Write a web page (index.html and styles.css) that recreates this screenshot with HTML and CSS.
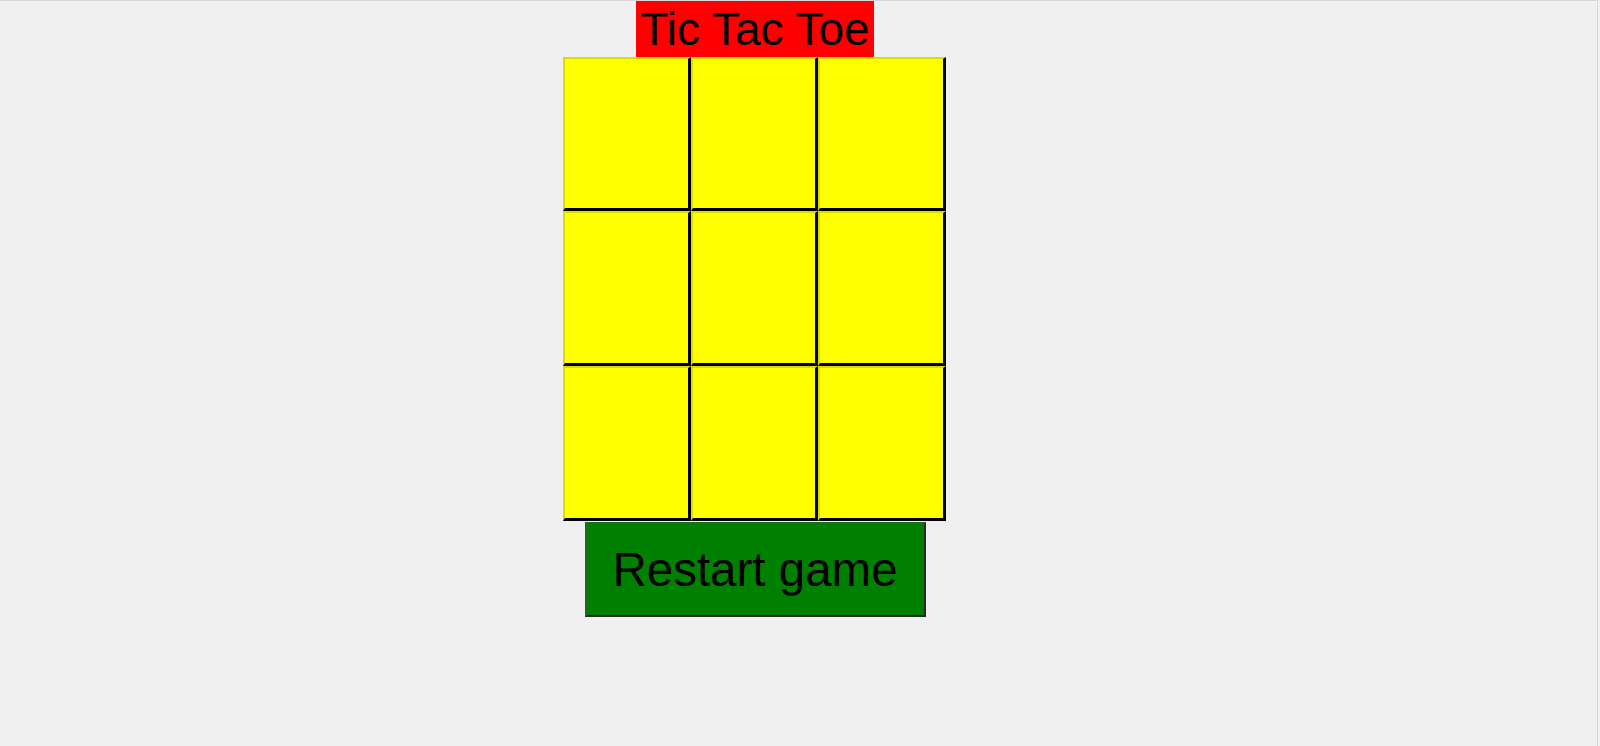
FILE: index.html
```html
<!DOCTYPE html>
<html>
<head>
<meta charset="utf-8">
<title>Tic Tac Toe</title>
<link rel="stylesheet" href="styles.css">
</head>
<body>
<div class="frame">
  <div class="game">
    <h1 class="title">Tic Tac Toe</h1>
    <div class="board">
      <button class="cell"></button>
      <button class="cell"></button>
      <button class="cell"></button>
      <button class="cell"></button>
      <button class="cell"></button>
      <button class="cell"></button>
      <button class="cell"></button>
      <button class="cell"></button>
      <button class="cell"></button>
    </div>
    <button class="restart">Restart game</button>
  </div>
</div>
</body>
</html>
```
FILE: styles.css
```css
html, body {
  margin: 0;
  padding: 0;
  background: #f0f0f0;
}
.frame {
  box-sizing: border-box;
  width: 1598px;
  height: 746px;
  border-top: 1px solid #d8d8d8;
  border-right: 1px solid #d8d8d8;
}
.game {
  width: 1510px;
  display: flex;
  flex-direction: column;
  align-items: center;
  font-family: "Liberation Sans", Arial, sans-serif;
}
.title {
  margin: 0;
  padding: 0 4px;
  background: #ff0000;
  color: #000;
  font-weight: normal;
  font-size: 46px;
  line-height: 56px;
  height: 56px;
  white-space: nowrap;
}
.board {
  margin-right: 2px;
  display: grid;
  grid-template-columns: 128px 127px 128px;
  grid-template-rows: 154px 155px 155px;
}
.cell {
  box-sizing: border-box;
  margin: 0;
  padding: 0;
  background: #ffff00;
  border-style: solid;
  border-width: 2px 3px 3px 2px;
  border-color: #dcdc00 #000 #000 #dcdc00;
}
.restart {
  box-sizing: border-box;
  margin: 1px 0 0;
  width: 341px;
  height: 95px;
  padding: 0;
  background: #008000;
  color: #000;
  font-family: "Liberation Sans", Arial, sans-serif;
  font-size: 47.5px;
  line-height: 54px;
  border-style: solid;
  border-width: 2px;
  border-color: #1d6b1d #2a2a2a #2a2a2a #1d6b1d;
}
```
